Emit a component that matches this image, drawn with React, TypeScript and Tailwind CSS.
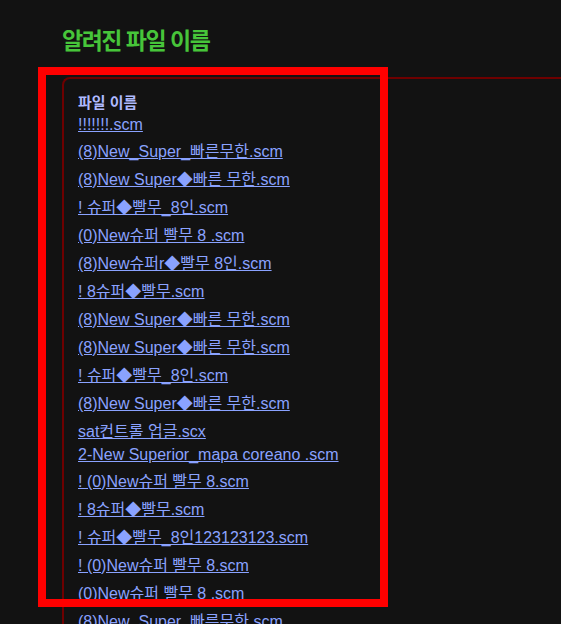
import React from 'react';

const files = [
  '!!!!!!!.scm',
  '(8)New_Super_빠른무한.scm',
  '(8)New Super◆빠른 무한.scm',
  '! 슈퍼◆빨무_8인.scm',
  '(0)New슈퍼 빨무 8 .scm',
  '(8)New슈퍼r◆빨무 8인.scm',
  '! 8슈퍼◆빨무.scm',
  '(8)New Super◆빠른 무한.scm',
  '(8)New Super◆빠른 무한.scm',
  '! 슈퍼◆빨무_8인.scm',
  '(8)New Super◆빠른 무한.scm',
  'sat컨트롤 업글.scx',
  '2-New Superior_mapa coreano .scm',
  '! (0)New슈퍼 빨무 8.scm',
  '! 8슈퍼◆빨무.scm',
  '! 슈퍼◆빨무_8인123123123.scm',
  '! (0)New슈퍼 빨무 8.scm',
  '(0)New슈퍼 빨무 8 .scm',
  '(8)New_Super_빠른무한.scm',
  '! 슈퍼◆빨무_8인.scm',
  '(8)New Super◆빠른 무한.scm',
];

export default function App() {
  return (
    <div
      className="relative w-[561px] h-[624px] overflow-hidden bg-[#121212] pl-[62px] pt-[22px]"
      style={{ fontFamily: '"Liberation Sans", "Noto Sans CJK KR", sans-serif' }}
    >
      <h1 className="text-[23px] leading-[normal] font-bold tracking-[-1.5px] text-[#47c53a]">
        알려진 파일 이름
      </h1>
      <section className="mt-[21px] w-[560px] border-2 border-r-0 border-[#6e0000] rounded-tl-lg pl-[14px] pt-[11px]">
        <div className="flex flex-col gap-[2px] leading-[normal]">
          <div className="py-px text-[15px] font-bold text-[#aeb9ff]">파일 이름</div>
          {files.map((name, i) => (
            <div key={i} className="py-px text-[16px]">
              <a href="#" className="text-[#8aa2ff] underline">
                {name}
              </a>
            </div>
          ))}
        </div>
      </section>
      <div className="absolute left-[38px] top-[67px] w-[350px] h-[540px] border-8 border-[#ff0000] pointer-events-none" />
    </div>
  );
}
